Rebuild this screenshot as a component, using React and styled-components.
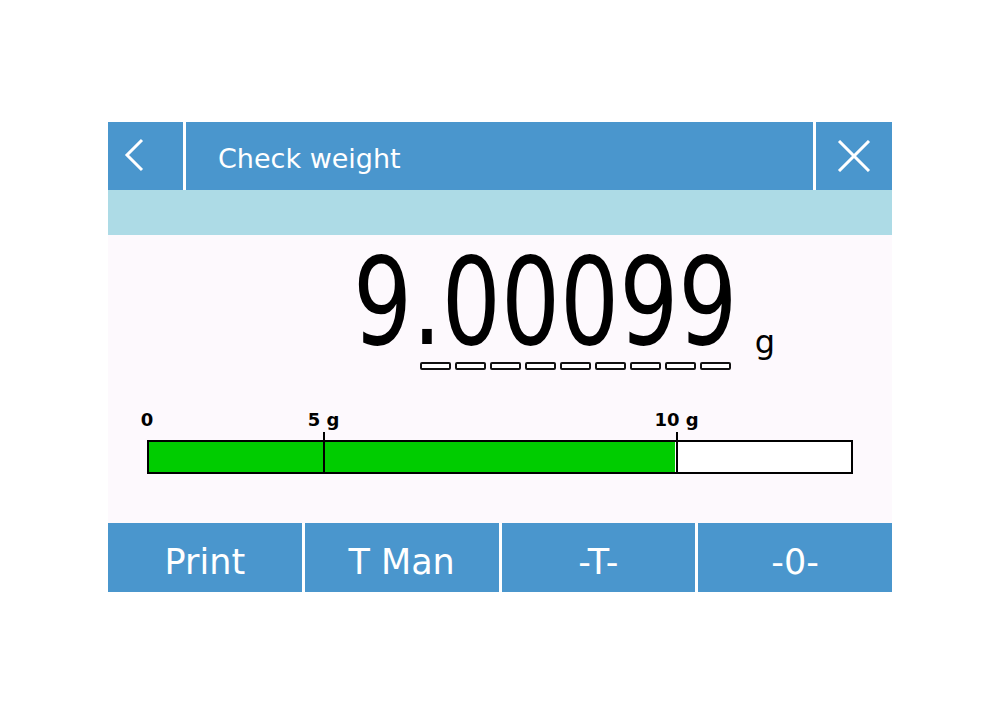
import React from "react";
import styled, { createGlobalStyle } from "styled-components";

const blue = "#4a96cd";

const GlobalStyle = createGlobalStyle`
    body {
        margin: 0;
        background: #ffffff;
        font-family: "DejaVu Sans", "Liberation Sans", sans-serif;
    }
`;

const Page = styled.div`
    padding: 122px 108px 0;
`;

const Screen = styled.div`
    width: 784px;
    display: flex;
    flex-direction: column;
`;

const Header = styled.div`
    height: 68px;
    display: flex;
    gap: 3px;
    background: #ffffff;
`;

const IconButton = styled.button`
    width: ${props => props.width}px;
    flex-shrink: 0;
    border: none;
    padding: 0 0 ${props => props.lift || 0}px ${props => props.pad || 0}px;
    background: ${blue};
    display: flex;
    align-items: center;
    justify-content: ${props => (props.pad ? "flex-start" : "center")};
`;

const Title = styled.div`
    flex: 1;
    background: ${blue};
    color: #ffffff;
    font-size: 27px;
    display: flex;
    align-items: center;
    padding: 4px 0 0 32px;
`;

const InfoStrip = styled.div`
    height: 45px;
    background: #addbe6;
`;

const Body = styled.div`
    height: 288px;
    background: #fdf9fd;
    display: flex;
    flex-direction: column;
`;

const ReadingRow = styled.div`
    display: flex;
    justify-content: flex-end;
    padding-right: 117px;
    margin-top: 6px;
`;

const ReadingCol = styled.div`
    display: flex;
    flex-direction: column;
    align-items: flex-end;
`;

const Digits = styled.div`
    width: 380px;
    height: 114px;
    display: flex;
    justify-content: flex-end;
    font-size: 122px;
    line-height: 122px;
    color: #000000;
`;

const DigitsText = styled.span`
    flex-shrink: 0;
    white-space: nowrap;
    transform: scaleX(0.762);
    transform-origin: right center;
`;

const Segments = styled.div`
    display: flex;
    gap: 4px;
    margin-top: 7px;
    margin-right: 7px;
`;

const Segment = styled.div`
    width: 31px;
    height: 8px;
    box-sizing: border-box;
    border: 2px solid #111111;
    border-radius: 2px;
    background: #ffffff;
`;

const Unit = styled.div`
    align-self: flex-start;
    margin-top: 85px;
    margin-left: 17px;
    font-size: 32px;
    line-height: 1;
    color: #000000;
`;

const Scale = styled.div`
    position: relative;
    margin: 41px 39px 0;
`;

const Labels = styled.div`
    position: relative;
    height: 21px;
`;

const Label = styled.span`
    position: absolute;
    top: 0;
    transform: translateX(-50%);
    font-size: 18px;
    font-weight: bold;
    line-height: 18px;
    white-space: nowrap;
    color: #000000;
`;

const Bar = styled.div`
    position: relative;
    height: 34px;
    margin-top: 8px;
    box-sizing: border-box;
    border: 2px solid #000000;
    background: #ffffff;
    overflow: hidden;
`;

const Fill = styled.div`
    height: 100%;
    background: #00cc00;
`;

const Tick = styled.div`
    position: absolute;
    bottom: 0;
    height: 42px;
    width: 2px;
    margin-left: -1px;
    background: #000000;
`;

const Footer = styled.div`
    height: 69px;
    display: grid;
    grid-template-columns: repeat(4, 1fr);
    gap: 3px;
    background: #ffffff;
`;

const FooterButton = styled.button`
    border: none;
    background: ${blue};
    color: #ffffff;
    font-family: "DejaVu Sans", "Liberation Sans", sans-serif;
    font-size: 35px;
    padding: 8px 0 0;
`;

function BackIcon() {
    return (
        <svg width="21" height="34" viewBox="0 0 21 34">
            <path d="M18 2 L3 17 L18 32" fill="none" stroke="#ffffff" strokeWidth="3" />
        </svg>
    );
}

function CloseIcon() {
    return (
        <svg width="34" height="32" viewBox="0 0 34 32">
            <path d="M2 1 L32 31 M32 1 L2 31" fill="none" stroke="#ffffff" strokeWidth="3" />
        </svg>
    );
}

const marks = [
    { text: "0", at: 0 },
    { text: "5 g", at: 25 },
    { text: "10 g", at: 75 },
];

export default function App() {
    const weight = "9.00099";
    const fill = 75;

    return (
        <Page>
            <GlobalStyle />
            <Screen>
                <Header>
                    <IconButton width={75} pad={16} lift={2}>
                        <BackIcon />
                    </IconButton>
                    <Title>Check weight</Title>
                    <IconButton width={76}>
                        <CloseIcon />
                    </IconButton>
                </Header>
                <InfoStrip />
                <Body>
                    <ReadingRow>
                        <ReadingCol>
                            <Digits>
                                <DigitsText>{weight}</DigitsText>
                            </Digits>
                            <Segments>
                                {Array.from({ length: 9 }).map((_, i) => (
                                    <Segment key={i} />
                                ))}
                            </Segments>
                        </ReadingCol>
                        <Unit>g</Unit>
                    </ReadingRow>
                    <Scale>
                        <Labels>
                            {marks.map(m => (
                                <Label key={m.text} style={{ left: `${m.at}%` }}>
                                    {m.text}
                                </Label>
                            ))}
                        </Labels>
                        <Bar>
                            <Fill style={{ width: `calc(${fill}% - 1px)` }} />
                        </Bar>
                        {marks.slice(1).map(m => (
                            <Tick key={m.text} style={{ left: `${m.at}%` }} />
                        ))}
                    </Scale>
                </Body>
                <Footer>
                    <FooterButton>Print</FooterButton>
                    <FooterButton>T Man</FooterButton>
                    <FooterButton>-T-</FooterButton>
                    <FooterButton>-0-</FooterButton>
                </Footer>
            </Screen>
        </Page>
    );
}
